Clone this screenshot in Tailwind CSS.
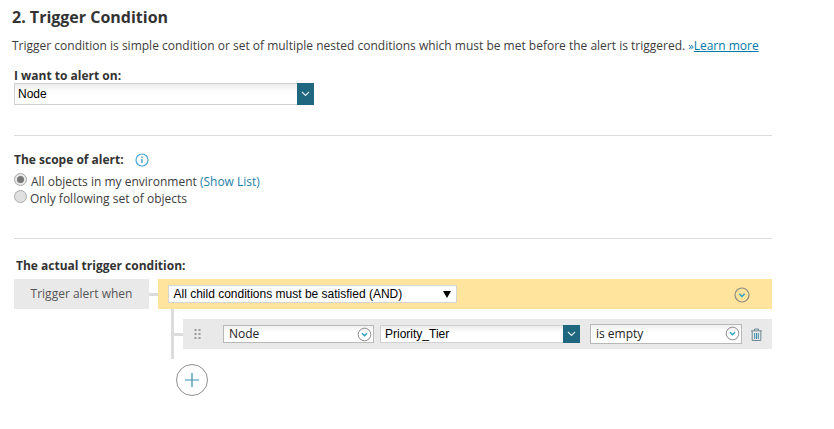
<!DOCTYPE html>
<html lang="en">
<head>
  <meta charset="UTF-8">
  <title>Trigger Condition</title>
  <script src="https://cdn.jsdelivr.net/npm/@tailwindcss/browser@4"></script>
</head>
<body class="bg-white w-[834px] h-[429px] overflow-hidden font-['Open_Sans',sans-serif] text-[#3c3c3c]">
  <div class="w-[772px] pt-[6px]">
    <h2 class="ml-[12px] h-[22px] text-[16px] leading-[22px] font-bold text-[#333]">2. Trigger Condition</h2>
    <p class="ml-[12px] mt-[9px] h-[18px] text-[12px] leading-[18px] whitespace-nowrap">Trigger condition is simple condition or set of multiple nested conditions which must be met before the alert is triggered. <a class="text-[#0079aa]"><span class="text-[11px]">»</span><span class="underline">Learn more</span></a></p>

    <div class="ml-[14px] mt-[13px]">
      <div class="h-[15px] text-[12px] leading-[15px] font-bold text-[#333]">I want to alert on:</div>
      <div class="flex w-[300px] h-[22px] border-y border-l border-[#d0d0d0] bg-gradient-to-b from-[#ececec] to-white to-40%">
        <div class="flex-1 pl-[3px] font-['Liberation_Sans',sans-serif] text-[12px] leading-[20px] text-black">Node</div>
        <div class="w-[17px] -my-px bg-[#1f667f] flex items-center justify-center">
          <svg width="9" height="6" viewBox="0 0 9 6" fill="none" stroke="#dfeaee" stroke-width="1.2"><path d="M1 1l3.500 3.500L8 1"/></svg>
        </div>
      </div>
    </div>

    <div class="ml-[14px] mt-[30px] border-t border-[#dcdcdc]"></div>

    <div class="ml-[14px] mt-[16px] flex items-center h-[16px] text-[12px] font-bold text-[#333]">
      <span>The scope of alert:</span>
      <svg class="ml-[11px]" width="14" height="14" viewBox="0 0 14 14" fill="none"><circle cx="7" cy="7" r="6" stroke="#4ea6d6" stroke-width="1.2"/><path d="M7 6v4M7 3.600v1.300" stroke="#4ea6d6" stroke-width="1.500"/></svg>
    </div>
    <div class="ml-[14px] mt-[5px] text-[12px] leading-[17px]">
      <div class="flex items-center h-[17px] gap-[4px]">
        <span class="w-[13px] h-[13px] -mt-[4px] rounded-full border border-[#a9a9a9] bg-[#e8e8e8] flex items-center justify-center"><span class="w-[7px] h-[7px] rounded-full bg-[#777]"></span></span>
        <span>All objects in my environment <span class="text-[#1f7fa8]">(Show List)</span></span>
      </div>
      <div class="flex items-center h-[17px] gap-[3px]">
        <span class="w-[13px] h-[13px] -mt-[4px] rounded-full border border-[#a9a9a9] bg-[#e0e0e0]"></span>
        <span>Only following set of objects</span>
      </div>
    </div>

    <div class="ml-[14px] mt-[31px] border-t border-[#dcdcdc]"></div>

    <div class="ml-[16px] mt-[19px] h-[16px] text-[12px] leading-[16px] font-bold text-[#333]">The actual trigger condition:</div>

    <div class="ml-[14px] mt-[5px] flex items-start">
      <div class="w-[135px] h-[30px] bg-[#e9e9e9] text-center text-[12px] leading-[30px] text-[#555]">Trigger alert when</div>
      <div class="w-[9px] h-[3px] mt-[14px] bg-[#dcdcdc]"></div>
      <div class="flex-1">
        <div class="h-[30px] bg-[#fee49c] flex items-center pl-[10px] pr-[22px]">
          <div class="w-[289px] h-[18px] bg-white border border-[#d4d4d4] flex items-center justify-between pl-[4.500px] pr-[4px] font-['Liberation_Sans',sans-serif] text-[12px] text-black">
            <span>All child conditions must be satisfied (AND)</span>
            <span class="w-0 h-0 border-x-[4px] border-x-transparent border-t-[7px] border-t-black mr-[1px]"></span>
          </div>
          <svg class="ml-auto mt-[2px]" width="16" height="16" viewBox="0 0 16 16" fill="none"><circle cx="8" cy="8" r="7" stroke="#8b8b80" stroke-width="1.200"/><path d="M5.300 6.800L8 9.500l2.700-2.700" stroke="#2a9ec4" stroke-width="1.500"/></svg>
        </div>
        <div class="ml-[13px] w-[3px] h-[50px] bg-[#dcdcdc] relative">
          <div class="absolute left-[3px] top-[24px] w-[9px] h-[3px] bg-[#dcdcdc]"></div>
        </div>
      </div>
    </div>

    <div class="relative -mt-[40px] ml-[183px] h-[30px] bg-[#e9e9e9] flex items-center">
      <svg class="ml-[11px]" width="8" height="12" viewBox="0 0 8 12" fill="#9a9a9a"><rect x="0.500" y="1" width="2" height="2"/><rect x="4.500" y="1" width="2" height="2"/><rect x="0.500" y="5" width="2" height="2"/><rect x="4.500" y="5" width="2" height="2"/><rect x="0.500" y="9" width="2" height="2"/><rect x="4.500" y="9" width="2" height="2"/></svg>
      <div class="ml-[21px] w-[151px] h-[18px] bg-gradient-to-b from-[#f1f1f1] to-white to-40% border border-[#b8b8b8] flex items-center justify-between pl-[5px] pr-[1px] text-[12px] text-[#222]">
        <span>Node</span>
        <svg width="15" height="15" viewBox="0 0 15 15" fill="none"><circle cx="7.500" cy="7.500" r="6.300" stroke="#8d8d8d"/><path d="M5 6.300l2.500 2.500L10 6.300" stroke="#2a9ec4" stroke-width="1.400"/></svg>
      </div>
      <div class="ml-[6px] flex w-[200px] h-[18px] border-y border-l border-[#d0d0d0] bg-gradient-to-b from-[#ececec] to-white to-40%">
        <div class="flex-1 pl-[4px] font-['Liberation_Sans',sans-serif] text-[12px] leading-[16px] text-black">Priority_Tier</div>
        <div class="w-[17px] -my-px bg-[#1f667f] flex items-center justify-center">
          <svg width="9" height="6" viewBox="0 0 9 6" fill="none" stroke="#dfeaee" stroke-width="1.2"><path d="M1 1l3.500 3.500L8 1"/></svg>
        </div>
      </div>
      <div class="ml-[10px] w-[152px] h-[20px] -mt-px bg-gradient-to-b from-[#f1f1f1] to-white to-40% border border-[#b8b8b8] flex items-center justify-between pl-[5px] pr-[1px] text-[12px] text-[#222]">
        <span>is empty</span>
        <svg width="15" height="15" viewBox="0 0 15 15" fill="none"><circle cx="7.500" cy="7.500" r="6.300" stroke="#8d8d8d"/><path d="M5 6.300l2.500 2.500L10 6.300" stroke="#2a9ec4" stroke-width="1.400"/></svg>
      </div>
      <svg class="ml-[8px]" width="13" height="13" viewBox="0 0 13 13" fill="none" stroke="#6f8893"><path d="M1 2.800h11M4.500 2.500V1h4v1.500"/><path d="M2.200 3v9.500h8.600V3"/><path d="M4.700 5v6M6.500 5v6M8.300 5v6" stroke="#3d8cae"/></svg>
    </div>

    <div class="ml-[176px] mt-[15px] w-[32px] h-[32px] rounded-full border-[1.500px] border-[#8f8f8f] flex items-center justify-center">
      <svg width="16" height="16" viewBox="0 0 16 16" fill="none" stroke="#3b8fae" stroke-width="1.200"><path d="M8 1v14M1 8h14"/></svg>
    </div>
  </div>
</body>
</html>
